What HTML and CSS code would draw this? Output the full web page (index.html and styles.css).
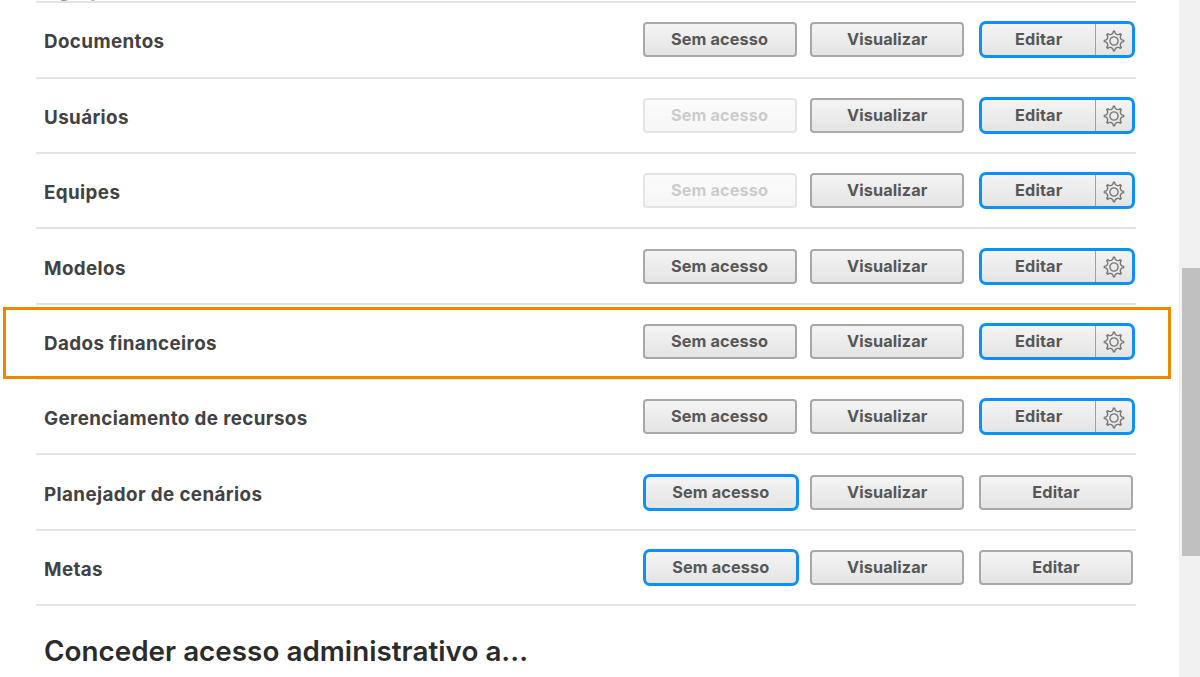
FILE: index.html
```
<!DOCTYPE html>
<html lang="pt-BR">
<head>
<meta charset="utf-8">
<title>Níveis de acesso</title>
<link rel="stylesheet" href="styles.css">
</head>
<body>
<div class="page">
<main class="panel">
<div class="row previous"><span class="name">Agrup</span></div>
<div id="rows"></div>
<h2 class="heading">Conceder acesso administrativo a...</h2>
</main>
<div class="scrollbar"><div class="thumb"></div></div>
<div class="highlight"></div>
</div>
<script src="app.js"></script>
</body>
</html>
```
FILE: app.js
```
const rows = [
  ["Documentos", "edit", false],
  ["Usuários", "edit", true],
  ["Equipes", "edit", true],
  ["Modelos", "edit", false],
  ["Dados financeiros", "edit", false],
  ["Gerenciamento de recursos", "edit", false],
  ["Planejador de cenários", "none", false],
  ["Metas", "none", false]
];

// Gear outline: eight narrow teeth joined by shallow corners.
let teeth = "";
for (let i = 0; i < 8; i++) {
  const point = (r, deg) => {
    const a = (i * 45 + deg) * Math.PI / 180;
    return (r * Math.sin(a)).toFixed(2) + " " + (-r * Math.cos(a)).toFixed(2);
  };
  teeth += (i ? "L" : "M") + point(8, -8) + "L" + point(9.7, -4) + "L" + point(9.7, 4) +
    "L" + point(8, 8) + "L" + point(7.2, 17) + "L" + point(7.2, 28);
}
const gear = `<span class="options"><svg class="gear" viewBox="-11 -11 22 22"><path d="${teeth}Z"/><circle r="4.1"/></svg></span>`;

document.getElementById("rows").innerHTML = rows.map(([name, level, locked]) => `
  <div class="row">
    <span class="name">${name}</span>
    <div class="choices">
      <div class="slot"><button class="button ${level === "none" ? "selected" : ""}" ${locked ? "disabled" : ""}><span class="label">Sem acesso</span></button></div>
      <div class="slot"><button class="button"><span class="label">Visualizar</span></button></div>
      <div class="slot"><button class="button ${level === "edit" ? "selected" : ""}"><span class="label">Editar</span>${level === "edit" ? gear : ""}</button></div>
    </div>
  </div>`).join("");
```
FILE: styles.css
```
* { box-sizing: border-box; }
body { margin: 0; background: #fff; font-family: Inter, "Liberation Sans", sans-serif; }
.page { position: relative; display: flex; width: 1200px; height: 677px; overflow: hidden; }
.panel { width: 1179px; padding: 0 43px 0 36px; }
.row { display: flex; align-items: center; justify-content: space-between; height: 75.36px; padding-left: 8px; border-bottom: 2px solid #e4e4e4; }
.previous { margin-top: -72.1px; align-items: flex-end; }
.previous .name { padding: 0; line-height: 20px; color: #999; }
.name { padding-top: 4px; color: #424242; font-size: 18.8px; font-weight: 650; letter-spacing: .39px; white-space: nowrap; }
.choices { display: grid; grid-template-columns: 154.3px 155.2px 157px; column-gap: 13.5px; width: 493.5px; }
.slot { display: flex; align-items: center; height: 37px; }
.button { display: flex; align-items: center; flex: none; width: 154px; height: 35px; padding: 0; border: 2px solid #a8a8a8; border-radius: 4px; background: linear-gradient(#f4f4f4, #e4e4e4); color: #575757; font: 650 16.3px Inter, sans-serif; letter-spacing: .1px; }
.button:disabled { opacity: .3; }
.selected { width: 156.5px; height: 37px; border: 3px solid #0a91f8; border-radius: 7px; }
.label { flex: 1; padding-bottom: 1px; text-align: center; }
.options { display: flex; align-items: center; justify-content: center; width: 37px; height: 100%; padding-top: 2px; border-left: 1px solid #a0a0a0; }
.gear { width: 22px; height: 22px; fill: none; stroke: #777; stroke-width: 1.4; stroke-linejoin: round; }
.heading { margin: 27px 0 0 8px; color: #2b2b2b; font-size: 27.8px; line-height: 36px; font-weight: 630; letter-spacing: .03px; white-space: nowrap; }
.scrollbar { width: 21px; padding: 268px 0 0 3px; background: #f0f0f0; }
.thumb { height: 288px; background: #c0c0c0; }
.highlight { position: absolute; left: 3px; top: 307px; width: 1168px; height: 72px; border: 3px solid #f08700; }
```
